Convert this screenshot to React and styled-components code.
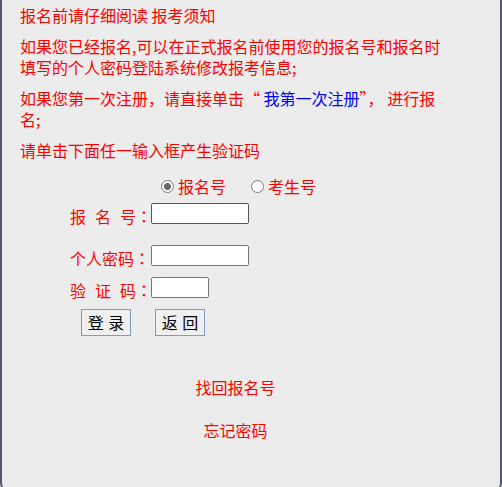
import React from 'react';
import styled, { createGlobalStyle } from 'styled-components';

const Global = createGlobalStyle`
  html, body { margin: 0; padding: 0; overflow: hidden; background: #ececec; }
  body { font-family: "Noto Sans CJK SC", "Microsoft YaHei", sans-serif; }
`;

const Panel = styled.div`
  box-sizing: border-box;
  width: 502px;
  height: 492px;
  background: #ececec;
  border: 2px solid #4f5b6a;
  border-top: none;
  border-radius: 0 0 9px 9px;
  padding: 5px 0 0 18px;
`;

const Para = styled.p`
  margin: 0 0 10px;
  width: 432px;
  font-size: 16px;
  line-height: 21px;
  color: #ff0000;
`;

const Blue = styled.span`
  color: #0000ff;
`;

const RadioRow = styled.div`
  display: flex;
  align-items: center;
  height: 21px;
  margin: 15px 0 0 141px;
  font-size: 16px;
  color: #ff0000;
`;

const RadioItem = styled.label`
  display: flex;
  align-items: center;
  gap: 4px;
  margin-right: 25px;
  line-height: 21px;
`;

const Radio = styled.input.attrs({ type: 'radio' })`
  appearance: none;
  -webkit-appearance: none;
  box-sizing: border-box;
  width: 13px;
  height: 13px;
  margin: 0;
  border: 1px solid #7a7a7a;
  border-radius: 50%;
  background: #fff;
  &:checked {
    background: radial-gradient(circle, #6a6a6a 0 3.2px, #fff 3.8px);
  }
`;

const FormRow = styled.div`
  display: flex;
  align-items: flex-start;
  margin: ${(p) => p.$mt}px 0 0 50px;
`;

const Label = styled.span`
  width: 81px;
  margin-top: 3px;
  font-size: 16px;
  line-height: 21px;
  color: #ff0000;
  word-spacing: 5.4px;
  white-space: pre;
`;

const Colon = styled.span`
  font-family: "Noto Sans CJK TC", sans-serif;
`;

const TextInput = styled.input`
  box-sizing: border-box;
  width: ${(p) => p.$w}px;
  height: 21px;
  margin: 0;
  padding: 1px 2px;
  border: 1px solid ${(p) => (p.$dark ? '#555' : '#767676')};
  border-radius: 2px;
  background: #fff;
  font-size: 13px;
`;

const ButtonRow = styled.div`
  display: flex;
  gap: 24px;
  margin: 8px 0 0 61px;
`;

const Button = styled.button`
  box-sizing: border-box;
  width: 50px;
  height: 27px;
  padding: 0;
  border: 1px solid #7f9dbb;
  border-radius: 0;
  background: #f0f0f0;
  color: #000;
  font-family: "Noto Sans CJK SC", sans-serif;
  font-size: 16px;
  line-height: 25px;
  word-spacing: 1px;
`;

const Links = styled.div`
  width: 431px;
  margin-top: 41px;
  text-align: center;
`;

const LinkItem = styled.a`
  display: block;
  margin-top: ${(p) => p.$mt}px;
  font-size: 16px;
  line-height: 21px;
  color: #ff0000;
  text-decoration: none;
`;

export default function App() {
  return (
    <>
      <Global />
      <Panel>
        <Para>报名前请仔细阅读 报考须知</Para>
        <Para>如果您已经报名,可以在正式报名前使用您的报名号和报名时填写的个人密码登陆系统修改报考信息;</Para>
        <Para>
          如果您第一次注册，请直接单击“ <Blue>我第一次注册</Blue>”， 进行报名;
        </Para>
        <Para>请单击下面任一输入框产生验证码</Para>
        <RadioRow>
          <RadioItem>
            <Radio name="kind" defaultChecked />
            报名号
          </RadioItem>
          <RadioItem>
            <Radio name="kind" />
            考生号
          </RadioItem>
        </RadioRow>
        <FormRow $mt={6}>
          <Label>报 名 号<Colon>：</Colon></Label>
          <TextInput $w={98} $dark />
        </FormRow>
        <FormRow $mt={18}>
          <Label>个人密码<Colon>：</Colon></Label>
          <TextInput $w={98} type="password" />
        </FormRow>
        <FormRow $mt={8}>
          <Label>验 证 码<Colon>：</Colon></Label>
          <TextInput $w={58} />
        </FormRow>
        <ButtonRow>
          <Button>登 录</Button>
          <Button>返 回</Button>
        </ButtonRow>
        <Links>
          <LinkItem $mt={0}>找回报名号</LinkItem>
          <LinkItem $mt={22}>忘记密码</LinkItem>
        </Links>
      </Panel>
    </>
  );
}
